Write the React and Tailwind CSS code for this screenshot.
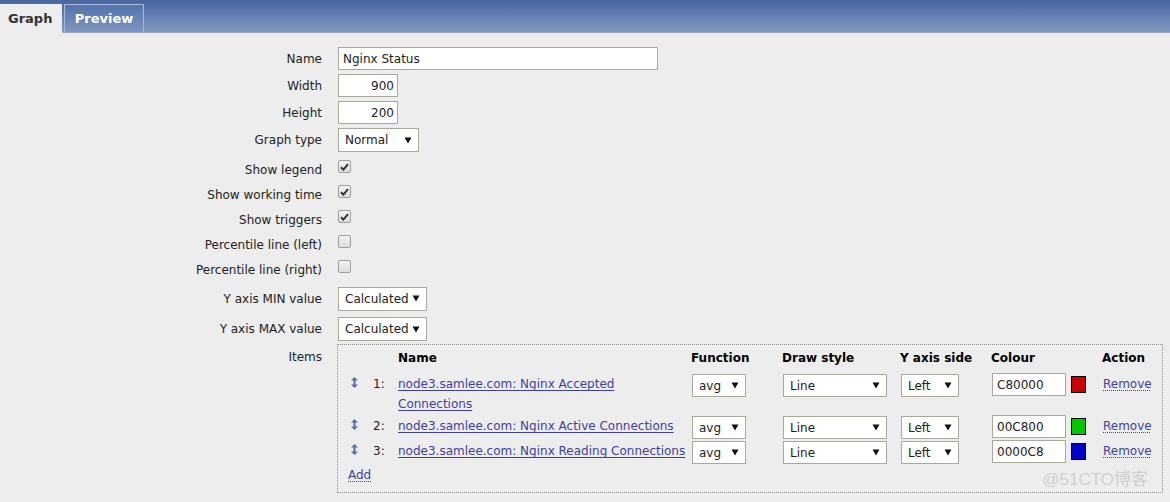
import React from "react";

const FONT = { fontFamily: '"DejaVu Sans",sans-serif' };

const Arrow = () => (
  <svg width="8" height="7" viewBox="0 0 8 7" className="shrink-0">
    <path d="M0.5 0.5 L7.5 0.5 L4 6.5 Z" fill="#111" />
  </svg>
);

const Select = ({ value, w, h = "h-[23px]" }) => (
  <div className={`${w} ${h} flex items-center justify-between bg-white border border-[#aca899] pl-[6px] pr-[6px] text-[#222]`}>
    <span>{value}</span>
    <Arrow />
  </div>
);

const Check = ({ on }) => (
  <div className="w-[13px] h-[13px] rounded-[2px] border border-[#a0a0a0] bg-gradient-to-b from-[#f4f4f4] to-[#dcdcdc] flex items-center justify-center">
    {on && (
      <svg width="9" height="8" viewBox="0 0 9 8">
        <path d="M1 4.2 L3.4 6.6 L8 1.2" stroke="#333" strokeWidth="2" fill="none" />
      </svg>
    )}
  </div>
);

const Drag = () => (
  <svg width="7" height="11" viewBox="0 0 7 11">
    <path d="M3.5 0 L7 3.5 L0 3.5 Z M3.5 11 L7 7.5 L0 7.5 Z" fill="#4f73a5" />
    <rect x="2.5" y="3" width="2" height="5" fill="#4f73a5" />
  </svg>
);

const Row = ({ label, h, children }) => (
  <div className={`flex items-center ${h}`}>
    <div className="w-[322px] text-right text-[#222]">{label}</div>
    <div className="ml-[16px] flex items-center">{children}</div>
  </div>
);

const items = [
  { n: "1:", name: "node3.samlee.com: Nginx Accepted Connections", col: "C80000", sw: "bg-[#c80000]" },
  { n: "2:", name: "node3.samlee.com: Nginx Active Connections", col: "00C800", sw: "bg-[#00c800]" },
  { n: "3:", name: "node3.samlee.com: Nginx Reading Connections", col: "0000C8", sw: "bg-[#0000c8]" },
];

const GRID = "grid grid-cols-[32px_28px_293px_91px_118px_91px_111px_1fr]";

export default function App() {
  return (
    <div style={FONT} className="relative w-[1170px] h-[502px] bg-[#ededed] text-[12px] leading-[20px] overflow-hidden">
      {/* top tab bar */}
      <div className="h-[33px] bg-gradient-to-b from-[#4765a0] to-[#8299c1] border-b border-[#9aa6bd] flex items-end gap-[2px]">
        <div className="h-[29px] w-[62px] bg-[#ededed] flex items-center pl-[8px] text-[13px] font-bold text-[#333] -mb-px">Graph</div>
        <div className="h-[28px] w-[80px] border border-b-0 border-[#a8b8d6] bg-gradient-to-b from-[#5473ad] to-[#7e96c0] flex items-center justify-center text-[13px] font-bold text-white">
          Preview
        </div>
      </div>

      {/* form */}
      <div className="pt-[12px]">
        <Row label="Name" h="h-[27px]">
          <div className="w-[320px] h-[23px] bg-white border border-[#aca899] pl-[4px] flex items-center text-[#222]">Nginx Status</div>
        </Row>
        <Row label="Width" h="h-[27px]">
          <div className="w-[60px] h-[23px] bg-white border border-[#aca899] pr-[3px] flex items-center justify-end text-[#222]">900</div>
        </Row>
        <Row label="Height" h="h-[27px]">
          <div className="w-[60px] h-[23px] bg-white border border-[#aca899] pr-[3px] flex items-center justify-end text-[#222]">200</div>
        </Row>
        <Row label="Graph type" h="h-[28px]">
          <Select value="Normal" w="w-[81px]" h="h-[24px]" />
        </Row>
        <div className="h-[3px]" />
        <Row label="Show legend" h="h-[25px]"><div className="-mt-[6px]"><Check on /></div></Row>
        <Row label="Show working time" h="h-[25px]"><div className="-mt-[6px]"><Check on /></div></Row>
        <Row label="Show triggers" h="h-[25px]"><div className="-mt-[6px]"><Check on /></div></Row>
        <Row label="Percentile line (left)" h="h-[25px]"><div className="-mt-[6px]"><Check /></div></Row>
        <Row label="Percentile line (right)" h="h-[25px]"><div className="-mt-[6px]"><Check /></div></Row>
        <Row label="Y axis MIN value" h="h-[33px]">
          <Select value="Calculated" w="w-[89px]" h="h-[24px]" />
        </Row>
        <Row label="Y axis MAX value" h="h-[28px]">
          <Select value="Calculated" w="w-[89px]" h="h-[24px]" />
        </Row>

        <div className="flex items-start mt-[1px]">
          <div className="w-[322px] text-right text-[#222] pt-[3px]">Items</div>
          <div className="ml-[15px] w-[826px] h-[149px] border border-dotted border-[#8a8a8a]">
            <div className={`${GRID} h-[27px] pt-[3px] font-bold text-black`}>
              <div />
              <div />
              <div>Name</div>
              <div>Function</div>
              <div>Draw style</div>
              <div>Y axis side</div>
              <div>Colour</div>
              <div>Action</div>
            </div>
            {items.map((it) => (
              <div key={it.n} className={`${GRID} items-start pt-[2px]`}>
                <div className="flex justify-center pt-[3px]"><Drag /></div>
                <div className="pl-[3px] text-[#222]">{it.n}</div>
                <div className="pr-[3px]">
                  <span className="text-[#3f3fa0] underline underline-offset-2 cursor-pointer">{it.name}</span>
                </div>
                <div className="pl-[1px]"><Select value="avg" w="w-[54px]" /></div>
                <div className="pl-[1px]"><Select value="Line" w="w-[104px]" /></div>
                <div className="pl-[1px]"><Select value="Left" w="w-[58px]" /></div>
                <div className="pl-[1px] flex items-start -mt-px">
                  <div className="w-[74px] h-[23px] bg-white border border-[#aca899] pl-[4px] flex items-center text-[#222]">{it.col}</div>
                  <div className={`ml-[5px] mt-[3px] w-[15px] h-[17px] border border-black ${it.sw}`} />
                </div>
                <div className="pl-[1px]">
                  <span className="text-[#3f3fa0] underline decoration-dotted underline-offset-2 cursor-pointer">Remove</span>
                </div>
              </div>
            ))}
            <div className="pl-[10px] pt-px">
              <span className="text-[#3f3fa0] underline decoration-dotted underline-offset-2 cursor-pointer">Add</span>
            </div>
          </div>
        </div>
      </div>

      <div
        className="absolute right-[22px] bottom-[12px] text-[17px] leading-[20px] text-[#d0d0d0]"
        style={{ fontFamily: '"Liberation Sans","Noto Sans CJK SC",sans-serif' }}
      >
        @51CTO博客
      </div>
    </div>
  );
}
